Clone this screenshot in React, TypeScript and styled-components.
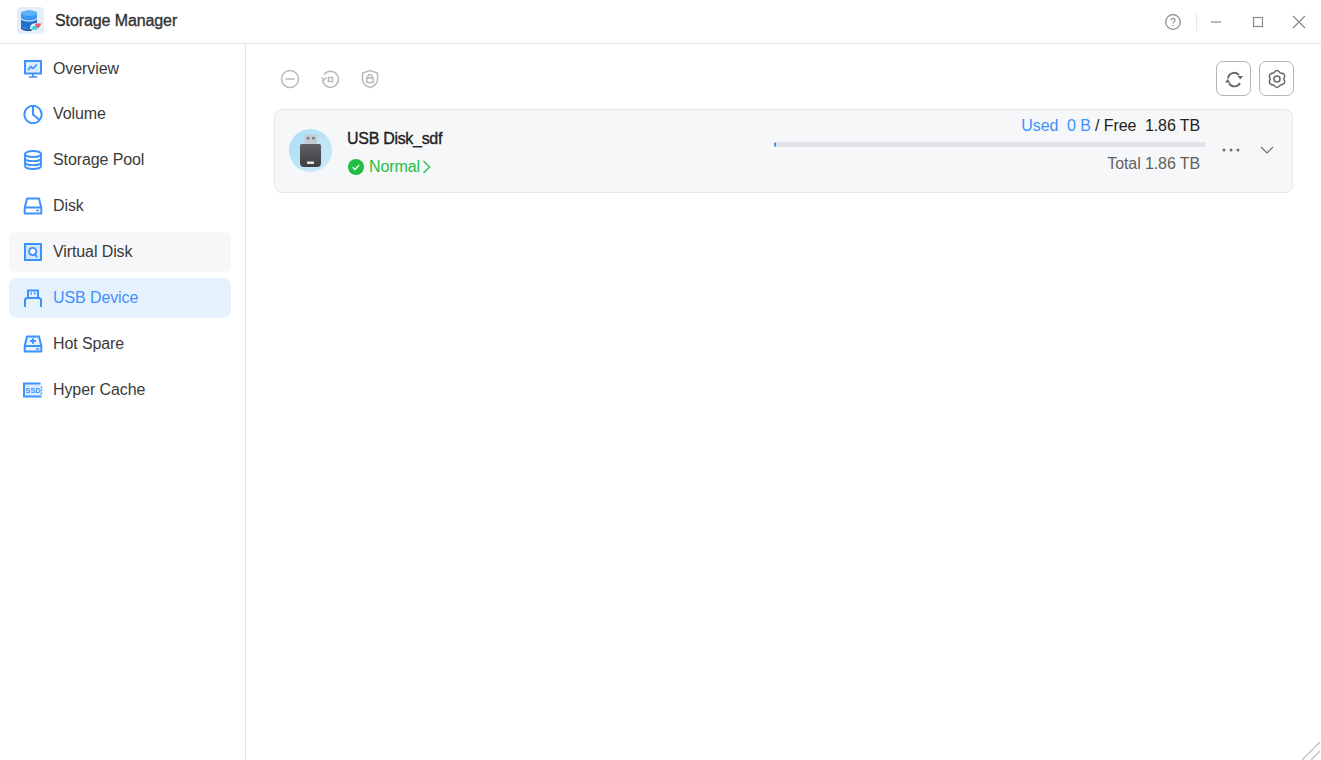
import React from "react";
import styled, { createGlobalStyle } from "styled-components";

const BLUE = "#3d92fd";

const GlobalStyle = createGlobalStyle`
  html, body {
    margin: 0;
    padding: 0;
    height: 100%;
    background: #fff;
    font-family: "Liberation Sans", Arial, sans-serif;
    font-size: 16px;
    letter-spacing: -0.1px;
    color: #3a3a3a;
  }
  #root { height: 100%; }
`;

const Window = styled.div`
  position: relative;
  display: flex;
  flex-direction: column;
  width: 1321px;
  height: 760px;
  overflow: hidden;
  background: #fff;
`;

const TitleBar = styled.header`
  display: flex;
  align-items: center;
  flex: none;
  box-sizing: content-box;
  height: 41px;
  padding: 0 0 2px 17px;
  border-bottom: 1px solid #e4e4e6;
`;

const AppName = styled.span`
  margin-left: 11px;
  color: #333;
  -webkit-text-stroke: 0.35px #333;
`;

const WindowControls = styled.div`
  display: flex;
  align-items: center;
  margin-left: auto;
  padding: 2px 11px 0 0;
  color: #8a8a8a;
`;

const Divider = styled.span`
  width: 1px;
  height: 18px;
  margin: 0 6px 0 15px;
  background: #e6e6e6;
`;

const ControlSlot = styled.span<{ $w: number }>`
  display: flex;
  justify-content: center;
  align-items: center;
  width: ${(p) => p.$w}px;
`;

const Body = styled.div`
  display: flex;
  flex: 1;
  min-height: 0;
`;

const Sidebar = styled.nav`
  display: flex;
  flex-direction: column;
  gap: 6px;
  flex: none;
  box-sizing: border-box;
  width: 246px;
  padding: 4px 14px 0 9px;
  border-right: 1px solid #e4e4e6;
`;

const NavItem = styled.div<{ $state?: "hover" | "active" }>`
  display: flex;
  align-items: center;
  box-sizing: border-box;
  height: 40px;
  padding-left: 14px;
  border-radius: 8px;
  color: ${(p) => (p.$state === "active" ? BLUE : "#3a3a3a")};
  background: ${(p) =>
    p.$state === "active" ? "#e6f1fe" : p.$state === "hover" ? "#f6f7f9" : "transparent"};

  &:first-child {
    padding-top: 2px;
  }
`;

const NavIcon = styled.span`
  display: flex;
  justify-content: center;
  align-items: center;
  width: 20px;
  margin-right: 10px;
  color: ${BLUE};
`;

const Main = styled.main`
  flex: 1;
  min-width: 0;
  padding: 17px 28px 0 28px;
`;

const Toolbar = styled.div`
  display: flex;
  align-items: center;
  height: 35px;
  margin-bottom: 13px;
`;

const ToolGroup = styled.div`
  display: flex;
  gap: 20px;
  padding-left: 6px;
  color: #b9b9b9;
`;

const ToolButtons = styled.div`
  display: flex;
  gap: 8px;
  margin-left: auto;
  margin-right: -1px;
`;

const SquareButton = styled.button`
  display: flex;
  justify-content: center;
  align-items: center;
  width: 35px;
  height: 35px;
  padding: 0;
  border: 1px solid #b4b4b4;
  border-radius: 7px;
  background: #fff;
  color: #666;
`;

const DeviceCard = styled.section`
  display: flex;
  align-items: center;
  box-sizing: border-box;
  height: 84px;
  padding-left: 14px;
  border: 1px solid #e6e7ea;
  border-radius: 8px;
  background: #f6f7f9;
`;

const BadgeWrap = styled.div`
  display: flex;
  margin-bottom: 1px;
`;

const DeviceInfo = styled.div`
  display: flex;
  flex-direction: column;
  gap: 10px;
  margin-left: 15px;
  margin-top: 3px;
`;

const DeviceName = styled.div`
  line-height: 18px;
  letter-spacing: -0.3px;
  color: #222;
  -webkit-text-stroke: 0.35px #222;
`;

const Status = styled.div`
  display: flex;
  align-items: center;
  gap: 5px;
  padding-left: 1px;
  line-height: 18px;
  color: #1fbf45;
`;

const Stats = styled.div`
  display: flex;
  flex-direction: column;
  flex: none;
  width: 432px;
  margin-left: auto;
  margin-bottom: 12px;
`;

const StatRow = styled.div`
  display: flex;
  justify-content: flex-end;
  align-items: center;
  height: 18px;
  padding-right: 6px;
  line-height: 18px;
  white-space: pre;
`;

const Used = styled.span`
  color: ${BLUE};
`;

const Dark = styled.span`
  color: #222;
`;

const Muted = styled.span`
  color: #5f5f5f;
`;

const Track = styled.div`
  height: 5px;
  margin: 7px 0 8px;
  border-radius: 3px;
  background: #e2e3e8;
  overflow: hidden;
`;

const Fill = styled.div`
  width: 2px;
  height: 100%;
  background: ${BLUE};
`;

const CardActions = styled.div`
  display: flex;
  align-items: center;
  flex: none;
  gap: 20px;
  margin: 0 0 3px 16px;
  padding-right: 18px;
  color: #6f6f6f;
`;

const Grip = styled.svg`
  position: absolute;
  right: 0;
  bottom: 0;
`;

const Logo = () => (
  <svg width="27" height="27" viewBox="0 0 27 27">
    <rect width="27" height="27" rx="4" fill="#e4eefb" />
    <path d="M4 6.500c0-2 4-3 8-3s8 1 8 3v4c0 2-4 3-8 3s-8-1-8-3z" fill="#3d97f2" />
    <ellipse cx="12" cy="6.300" rx="8" ry="2.800" fill="#5cb2f8" />
    <path d="M4 12.500c2 1.600 5 2 8 2s6-.4 8-2V16c-5 0-7 2-7 6-5 0-9-1-9-3z" fill="#1d72cf" />
    <path d="M4 19c0 2 4 3.300 9 3.300 .5 0 1 0 1.500-.1V24c-6 .4-10.500-1-10.500-3z" fill="#0f4f9e" />
    <path d="M14 22.500c.5-2.500 2.500-4 5-4 .5 0 1 .1 1.500.2l-1 4.300z" fill="#41d1d8" />
    <path d="M18 16.500h6.500l-3 5-3-2.500z" fill="#e8606c" />
  </svg>
);

const UsbBadge = () => (
  <svg width="43" height="43" viewBox="0 0 43 43">
    <defs>
      <linearGradient id="usbBg" x1="0" y1="0" x2="1" y2="1">
        <stop offset="0" stopColor="#a9def5" />
        <stop offset="1" stopColor="#cdeafa" />
      </linearGradient>
      <linearGradient id="usbBody" x1="0" y1="0" x2="0" y2="1">
        <stop offset="0" stopColor="#5e6064" />
        <stop offset="1" stopColor="#3c3e42" />
      </linearGradient>
    </defs>
    <circle cx="21.500" cy="21.500" r="21.500" fill="url(#usbBg)" />
    <rect x="15.500" y="5.500" width="12.500" height="10" fill="#c3ccd2" />
    <rect x="17.500" y="8" width="3" height="2.500" fill="#7b858c" />
    <rect x="23" y="8" width="3" height="2.500" fill="#7b858c" />
    <path d="M11 16.500q0-1.500 1.500-1.500h18q1.500 0 1.500 1.500V34q0 4-4 4H15q-4 0-4-4z" fill="url(#usbBody)" />
    <rect x="18" y="32.500" width="7" height="2.500" fill="#e4e4e4" />
  </svg>
);

const iconProps = {
  fill: "none",
  stroke: "currentColor",
  strokeWidth: 2,
  strokeLinecap: "round" as const,
  strokeLinejoin: "round" as const,
};

const navItems: { label: string; state?: "hover" | "active"; icon: React.ReactNode }[] = [
  {
    label: "Overview",
    icon: (
      <svg width="20" height="20" viewBox="0 0 20 20" {...iconProps}>
        <rect x="2" y="2" width="16" height="12.500" fill="#dcecff" strokeLinejoin="miter" />
        <path d="M5.500 10.500l2.500-3 2 2 3.500-3.500" strokeWidth="1.700" />
        <path d="M10 15v2.500M6.500 18h7" strokeWidth="1.700" />
      </svg>
    ),
  },
  {
    label: "Volume",
    icon: (
      <svg width="20" height="20" viewBox="0 0 20 20" {...iconProps}>
        <circle cx="10" cy="10.500" r="8.700" />
        <path d="M10 2v8.500l6 5" />
      </svg>
    ),
  },
  {
    label: "Storage Pool",
    icon: (
      <svg width="20" height="20" viewBox="0 0 20 20" {...iconProps} strokeWidth="1.800">
        <ellipse cx="10" cy="4" rx="8" ry="3" />
        <path d="M2 4v12c0 1.700 3.600 3 8 3s8-1.300 8-3V4" />
        <path d="M2 8.200c0 1.700 3.600 3 8 3s8-1.300 8-3M2 12.200c0 1.700 3.600 3 8 3s8-1.300 8-3" />
      </svg>
    ),
  },
  {
    label: "Disk",
    icon: (
      <svg width="20" height="20" viewBox="0 0 20 20" {...iconProps}>
        <path d="M4 2.500h12l2.300 9.500v5.500H1.700V12z" />
        <path d="M2 11.500h16" />
        <path d="M13.500 14.500h2" strokeWidth="1.500" />
      </svg>
    ),
  },
  {
    label: "Virtual Disk",
    state: "hover",
    icon: (
      <svg width="20" height="20" viewBox="0 0 20 20" {...iconProps}>
        <rect x="2" y="2" width="16" height="16" fill="#d3e6fd" strokeLinejoin="miter" />
        <circle cx="9.700" cy="9.500" r="3.600" fill="#fff" strokeWidth="1.900" />
        <path d="M11.500 12l2 2.500" strokeWidth="1.900" />
      </svg>
    ),
  },
  {
    label: "USB Device",
    state: "active",
    icon: (
      <svg width="20" height="20" viewBox="0 0 20 20" {...iconProps} strokeLinecap="butt" strokeLinejoin="miter">
        <path d="M5 10V2.500h10V10" />
        <path d="M2 19v-7.500l1.500-1.500h13l1.500 1.500V19" />
        <path d="M7.500 5.500h1.500M11 5.500h1.500" strokeWidth="1.800" />
      </svg>
    ),
  },
  {
    label: "Hot Spare",
    icon: (
      <svg width="20" height="20" viewBox="0 0 20 20" {...iconProps}>
        <path d="M4 2.500h12l2.300 9.500v5.500H1.700V12z" fill="#e6f1fe" />
        <path d="M2 12h16" />
        <path d="M13.500 15h2" strokeWidth="1.500" />
        <path d="M10 4.800v4.400M7.800 7h4.400" strokeWidth="1.800" />
      </svg>
    ),
  },
  {
    label: "Hyper Cache",
    icon: (
      <svg width="20" height="20" viewBox="0 0 20 20">
        <path d="M17.500 3.500H1v13h17.500" fill="#dcecff" stroke="currentColor" strokeWidth="2" />
        <path d="M18.500 6.500v1.800M18.500 9.500v1.800M18.500 12.500v1.800" stroke="currentColor" strokeWidth="1.500" />
        <text x="2.600" y="12.800" fontSize="7.200" fontWeight="700" letterSpacing="0" fill="currentColor" fontFamily="Liberation Sans">
          SSD
        </text>
      </svg>
    ),
  },
];

export default function App() {
  return (
    <Window>
      <GlobalStyle />
      <TitleBar>
        <Logo />
        <AppName>Storage Manager</AppName>
        <WindowControls>
          <svg width="16" height="16" viewBox="0 0 16 16" fill="none" stroke="currentColor">
            <circle cx="8" cy="8" r="7.300" strokeWidth="1.200" />
            <path d="M6 6.300c0-1.200 1-2 2-2s2 .8 2 1.900c0 1.700-2 1.600-2 3.200" strokeWidth="1.200" />
            <path d="M8 11v1.200" strokeWidth="1.200" />
          </svg>
          <Divider />
          <ControlSlot $w={25}>
            <svg width="12" height="12" viewBox="0 0 12 12">
              <path d="M1 6h10" stroke="currentColor" strokeWidth="1.200" />
            </svg>
          </ControlSlot>
          <ControlSlot $w={59}>
            <svg width="12" height="12" viewBox="0 0 12 12">
              <rect x="1.500" y="1.500" width="9" height="9" fill="none" stroke="currentColor" strokeWidth="1.200" />
            </svg>
          </ControlSlot>
          <ControlSlot $w={23}>
            <svg width="14" height="14" viewBox="0 0 14 14">
              <path d="M1 1l12 12M13 1L1 13" stroke="currentColor" strokeWidth="1.200" />
            </svg>
          </ControlSlot>
        </WindowControls>
      </TitleBar>
      <Body>
        <Sidebar>
          {navItems.map((item) => (
            <NavItem key={item.label} $state={item.state}>
              <NavIcon>{item.icon}</NavIcon>
              {item.label}
            </NavItem>
          ))}
        </Sidebar>
        <Main>
          <Toolbar>
            <ToolGroup>
              <svg width="20" height="20" viewBox="0 0 20 20" fill="none" stroke="currentColor" strokeWidth="1.500">
                <circle cx="10" cy="10" r="8.500" />
                <path d="M5.500 10h9" />
              </svg>
              <svg width="20" height="20" viewBox="0 0 20 20" fill="none" stroke="currentColor" strokeWidth="1.500">
                <path d="M4 5.500A8 8 0 1 1 2.500 11" />
                <path d="M1.500 8.500l2.500 2.500 2.500-2.500" />
                <rect x="8.500" y="8.500" width="4" height="4" />
              </svg>
              <svg width="20" height="20" viewBox="0 0 20 20" fill="none" stroke="currentColor" strokeWidth="1.500">
                <path d="M10 1.500l7.500 2.500v6.500c0 4-3.500 6.700-7.500 8-4-1.300-7.500-4-7.500-8V4z" />
                <rect x="6.800" y="9" width="6.400" height="4.500" />
                <path d="M8 9V7.500a2 2 0 0 1 4 0V9" />
              </svg>
            </ToolGroup>
            <ToolButtons>
              <SquareButton aria-label="Refresh">
                <svg width="20" height="20" viewBox="0 0 20 20">
                  <path d="M4 9.500A6.300 6.300 0 0 1 15 6" fill="none" stroke="currentColor" strokeWidth="1.900" />
                  <path d="M16 14A6.300 6.300 0 0 1 5 14.200" fill="none" stroke="currentColor" strokeWidth="1.900" />
                  <path d="M13.600 10h5.400l-2.700-3.600z" fill="currentColor" transform="rotate(180 16.300 8.500)" />
                  <path d="M1 10.500h5.400l-2.700 3.600z" fill="currentColor" transform="rotate(180 3.700 12)" />
                </svg>
              </SquareButton>
              <SquareButton aria-label="Settings">
                <svg width="20" height="20" viewBox="0 0 20 20" fill="none" stroke="currentColor" strokeWidth="1.500">
                  <path d="M6.600 4.110Q10 -1 13.400 4.110Q19.530 4.500 16.800 10Q19.530 15.500 13.400 15.890Q10 21 6.600 15.890Q.47 15.500 3.200 10Q.47 4.500 6.600 4.110Z" />
                  <circle cx="10" cy="10" r="3" />
                </svg>
              </SquareButton>
            </ToolButtons>
          </Toolbar>
          <DeviceCard>
            <BadgeWrap>
              <UsbBadge />
            </BadgeWrap>
            <DeviceInfo>
              <DeviceName>USB Disk_sdf</DeviceName>
              <Status>
                <svg width="16" height="16" viewBox="0 0 17 17">
                  <circle cx="8.500" cy="8.500" r="8.500" fill="#1fbf45" />
                  <path d="M5 8.700l2.500 2.500 4.500-5" fill="none" stroke="#fff" strokeWidth="1.400" />
                </svg>
                <span>Normal</span>
                <svg width="9" height="14" viewBox="0 0 9 14" style={{ marginLeft: -3 }}>
                  <path d="M1.500 1l6 6-6 6" fill="none" stroke="currentColor" strokeWidth="1.300" />
                </svg>
              </Status>
            </DeviceInfo>
            <Stats>
              <StatRow>
                <Used>Used  0 B</Used>
                <Dark> / Free  1.86 TB</Dark>
              </StatRow>
              <Track>
                <Fill />
              </Track>
              <StatRow>
                <Muted>Total 1.86 TB</Muted>
              </StatRow>
            </Stats>
            <CardActions>
              <svg width="18" height="4" viewBox="0 0 18 4">
                <circle cx="2" cy="2" r="1.500" fill="currentColor" />
                <circle cx="9" cy="2" r="1.500" fill="currentColor" />
                <circle cx="16" cy="2" r="1.500" fill="currentColor" />
              </svg>
              <svg width="14" height="8" viewBox="0 0 14 8">
                <path d="M1 1l6 6 6-6" fill="none" stroke="currentColor" strokeWidth="1.200" />
              </svg>
            </CardActions>
          </DeviceCard>
        </Main>
      </Body>
      <Grip width="20" height="20" viewBox="0 0 20 20">
        <path d="M1 20L19 2M10 20L19 11" stroke="#c4c6cc" strokeWidth="1.500" />
      </Grip>
    </Window>
  );
}
